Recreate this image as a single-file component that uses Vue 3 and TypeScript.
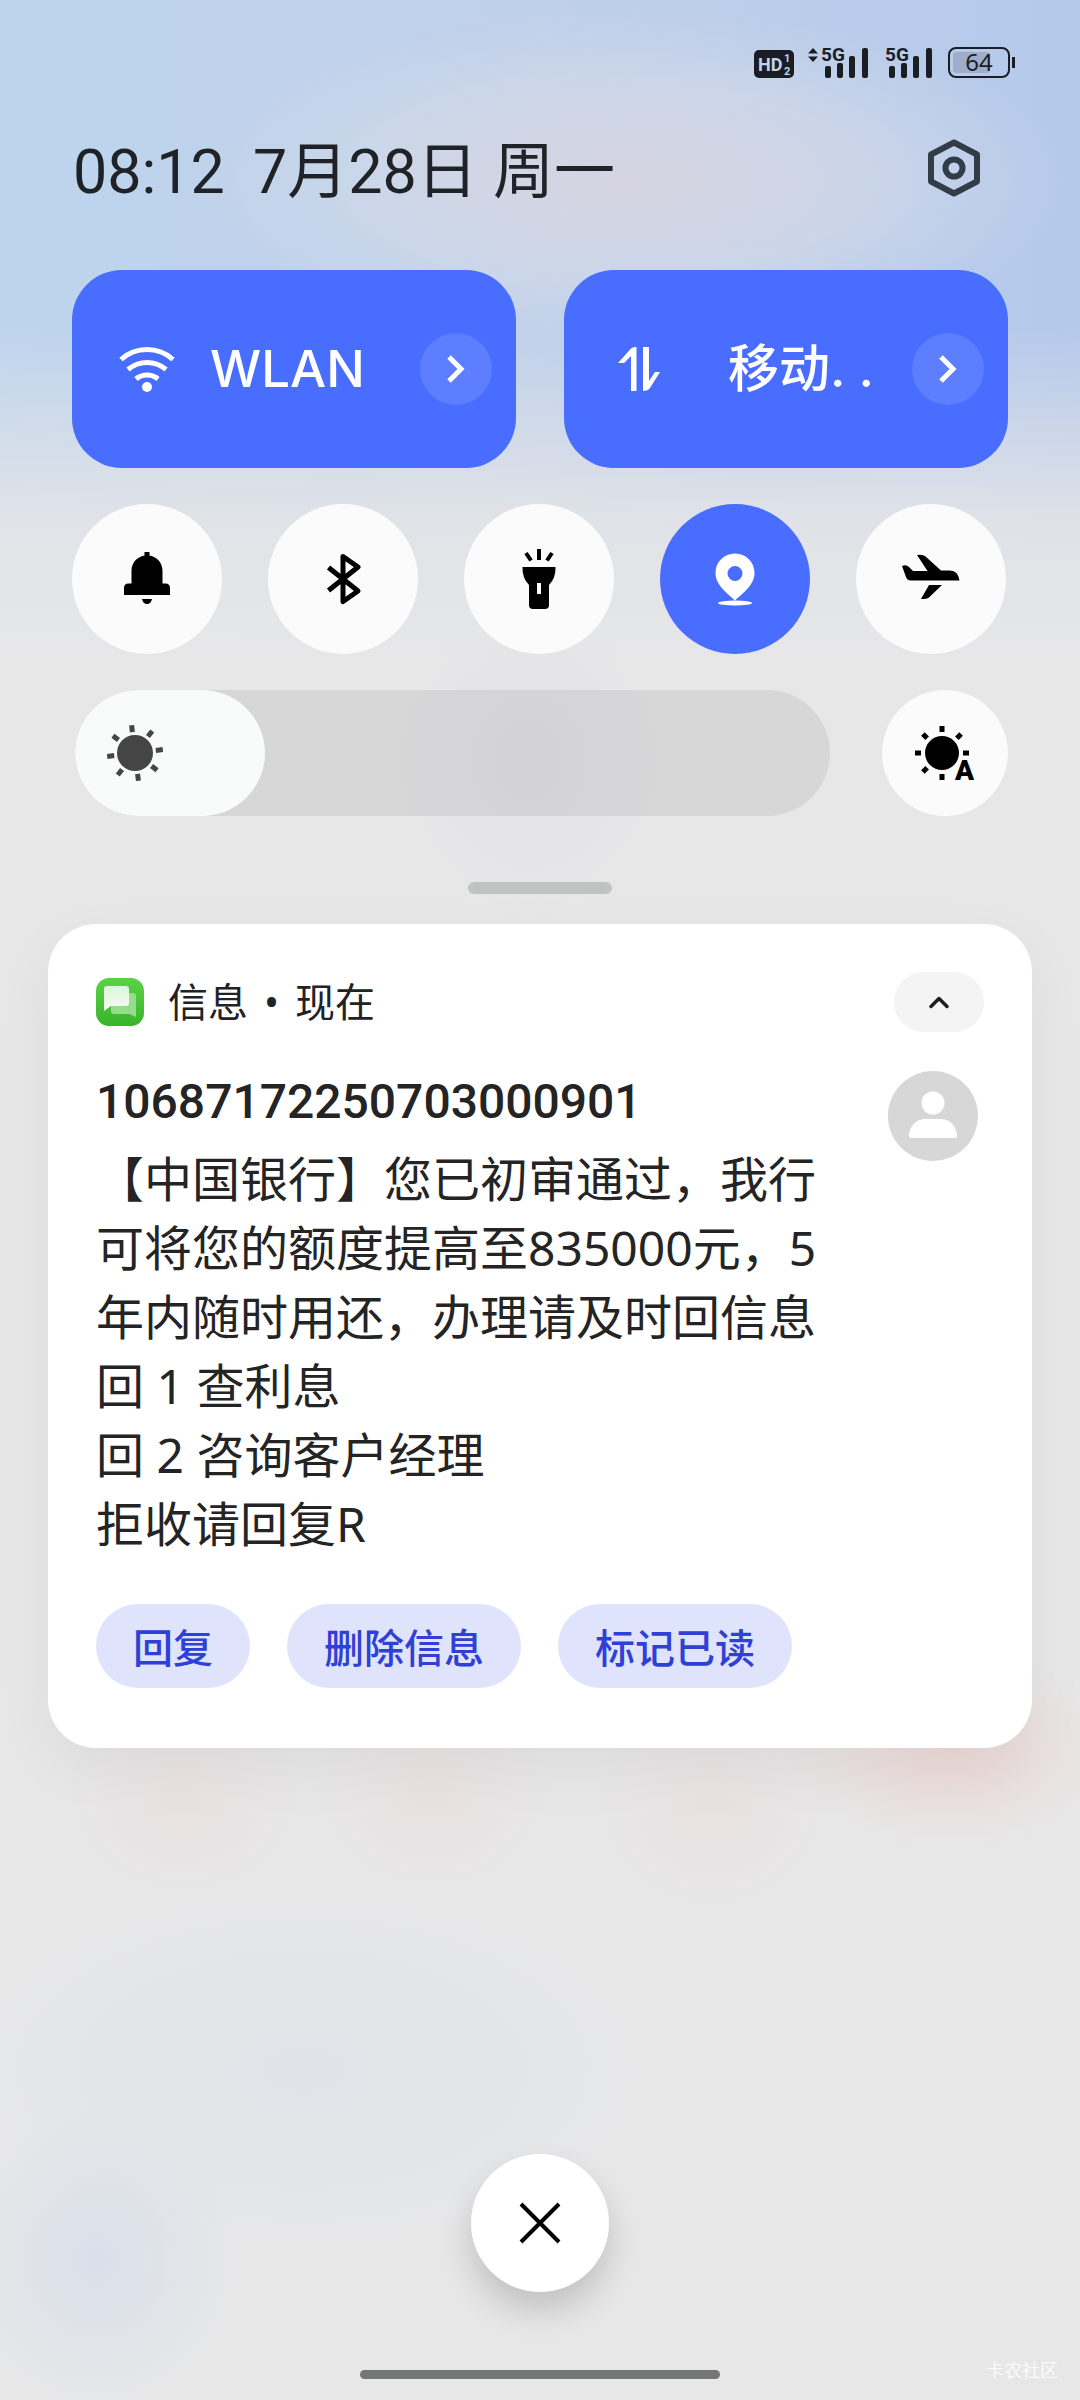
<script setup lang="ts">
import { ref } from 'vue'

interface Toggle {
  id: string
  label: string
  on: boolean
}

const toggles = ref<Toggle[]>([
  { id: 'bell', label: '响铃', on: false },
  { id: 'bluetooth', label: '蓝牙', on: false },
  { id: 'torch', label: '手电筒', on: false },
  { id: 'location', label: '定位', on: true },
  { id: 'plane', label: '飞行模式', on: false },
])

const brightness = ref<number>(0)

const message: string[] = [
  '【中国银行】您已初审通过，我行可将您的额度提高至835000元，5年内随时用还，办理请及时回信息',
  '回 1 查利息',
  '回 2 咨询客户经理',
  '拒收请回复R',
]

const actions: string[] = ['回复', '删除信息', '标记已读']

const rays: number[] = [0, 45, 90, 135, 180, 225, 270, 315]
const autoRays: number[] = [0, 45, 90, 180, 225, 270, 315]
</script>

<template>
  <div class="shade">
    <div class="status">
      <svg class="hd" width="40" height="28" viewBox="0 0 40 28">
        <rect width="40" height="28" rx="5" fill="#1a1e24" />
        <text x="4" y="21" font-size="18" font-weight="700" fill="#c3d2ec">HD</text>
        <text x="30" y="12" font-size="11" font-weight="700" fill="#c3d2ec">1</text>
        <text x="30" y="25" font-size="11" font-weight="700" fill="#c3d2ec">2</text>
      </svg>
      <svg class="signal" width="60" height="32" viewBox="0 0 60 32" fill="#1a1e24">
        <path d="M0 7.500 5 2l5 5.500zM0 10.500h10L5 16z" />
        <text x="13" y="15" font-size="19" font-weight="700">5G</text>
        <rect x="17" y="20" width="6" height="12" rx="2" />
        <rect x="29" y="17" width="6" height="15" rx="2" />
        <rect x="41" y="10" width="6" height="22" rx="2" />
        <rect x="54" y="2" width="6" height="30" rx="2" />
      </svg>
      <svg class="signal second" width="47" height="32" viewBox="0 0 47 32" fill="#1a1e24">
        <text x="0" y="15" font-size="19" font-weight="700">5G</text>
        <rect x="4" y="20" width="6" height="12" rx="2" />
        <rect x="16" y="17" width="6" height="15" rx="2" />
        <rect x="28" y="10" width="6" height="22" rx="2" />
        <rect x="41" y="2" width="6" height="30" rx="2" />
      </svg>
      <svg class="battery" width="67" height="31" viewBox="0 0 67 31">
        <rect x="5" y="5" width="37" height="21" rx="3" fill="#9fadca" />
        <rect x="1" y="1" width="60" height="29" rx="7" fill="none" stroke="#1a1e24" stroke-width="2" />
        <path d="M65.500 10v11" stroke="#1a1e24" stroke-width="3" />
        <text x="31" y="24" font-size="24" text-anchor="middle" fill="#1a1e24">64</text>
      </svg>
    </div>

    <header class="head">
      <div class="clock">
        <span>08:12</span>
        <span>7月28日 周一</span>
      </div>
      <button class="plain" aria-label="设置">
        <svg width="54" height="60" viewBox="0 0 54 60" fill="none" stroke="#323c48" stroke-width="6" stroke-linejoin="round">
          <path d="M27 4.500 50 16.500V43.500L27 55.500 4 43.500V16.500z" />
          <circle cx="27" cy="30" r="8.500" />
        </svg>
      </button>
    </header>

    <section class="tiles">
      <div class="tile">
        <svg class="tile-icon" width="56" height="48" viewBox="0 0 56 48" fill="none" stroke="#fff" stroke-width="5">
          <path d="M2 14.500a39 39 0 0 1 52 0M9 24.500a29 29 0 0 1 38 0M17 34a17 17 0 0 1 22 0" />
          <circle cx="28" cy="42" r="5" fill="#fff" stroke="none" />
        </svg>
        <span class="tile-name">WLAN</span>
        <button class="more" aria-label="WLAN 设置">
          <svg width="18" height="28" viewBox="0 0 18 28" fill="none" stroke="#fff" stroke-width="5"><path d="M2 2l12 12L2 26" /></svg>
        </button>
      </div>
      <div class="tile">
        <svg class="tile-icon" width="56" height="48" viewBox="-7 0 56 48" fill="#fff">
          <path d="M13 46V11L6 18H0L13 3.500Q15 1.500 18.500 2V46zM25 2h6V36L37 27H42L32 43Q30 46 25 46z" />
        </svg>
        <span class="tile-name center">移动. .</span>
        <button class="more" aria-label="移动数据设置">
          <svg width="18" height="28" viewBox="0 0 18 28" fill="none" stroke="#fff" stroke-width="5"><path d="M2 2l12 12L2 26" /></svg>
        </button>
      </div>
    </section>

    <section class="toggles">
      <button
        v-for="t in toggles"
        :key="t.id"
        class="round"
        :class="{ on: t.on }"
        :aria-label="t.label"
        :aria-pressed="t.on"
        @click="t.on = !t.on"
      >
        <svg width="60" height="60" viewBox="0 0 60 60" fill="currentColor">
          <path
            v-if="t.id === 'bell'"
            d="M27.500 3h5v3.500C40.500 8 45.500 14 45.500 22v12.500h3q4.500 0 4.500 4.500v7H7v-7q0-4.500 4.500-4.500h3V22C14.500 14 19.500 8 27.500 6.500zM25 50h10q-1 5-5 5t-5-5z"
          />
          <path
            v-else-if="t.id === 'bluetooth'"
            d="M15.500 18.500 45 42 30 52.500V7.500L45 18 15.500 41.500"
            fill="none"
            stroke="currentColor"
            stroke-width="5"
            stroke-linejoin="round"
          />
          <g v-else-if="t.id === 'torch'">
            <path d="M13.500 18h33q.5 11-6.500 18v20q0 4-4 4H24q-4 0-4-4V36q-7-7-6.500-18zM28 34v11h4V34z" fill-rule="evenodd" />
            <path d="M30 0v11M17 4l5 7.500M43 4l-5 7.500" stroke="currentColor" stroke-width="4" />
          </g>
          <g v-else-if="t.id === 'location'">
            <path d="M30 4.500c-11 0-19.500 8.500-19.500 19.500 0 13 14 22 19.500 27.500C35.500 46 49.500 37 49.500 24 49.500 13 41 4.500 30 4.500zm0 12.500a7.500 7.500 0 1 1 0 15 7.500 7.500 0 0 1 0-15z" fill-rule="evenodd" />
            <ellipse cx="30" cy="54" rx="17" ry="2.500" />
          </g>
          <path
            v-else
            d="M1 17q4-2 7 1l4 4H26.500L16 6q4-1 8 1L40 21.500H49q8 0 9.500 10H10q-4 0-5-3.500zM28 36h13L28 48.500q-2 1.500-8 1.500z"
          />
        </svg>
      </button>
    </section>

    <section class="bright">
      <div class="slider">
        <input v-model.number="brightness" type="range" min="0" max="100" aria-label="亮度" />
        <svg class="sun" width="60" height="60" viewBox="-30 -30 60 60" fill="#454545">
          <circle r="18" />
          <rect v-for="a in rays" :key="a" x="-2.500" y="-28" width="5" height="7" :transform="`rotate(${a - 7})`" />
        </svg>
      </div>
      <button class="round auto" aria-label="自动亮度">
        <svg width="66" height="72" viewBox="-30 -36 66 72">
          <circle r="17" />
          <rect v-for="a in autoRays" :key="a" x="-2.500" y="-27" width="5" height="6" :transform="`rotate(${a})`" />
          <text x="13" y="27" font-size="28" font-weight="900" stroke="#fbfbfb" stroke-width="4" paint-order="stroke">A</text>
        </svg>
      </button>
    </section>

    <div class="grip"></div>

    <article class="card">
      <div class="card-head">
        <svg width="48" height="48" viewBox="0 0 48 48">
          <defs>
            <linearGradient id="green" x1="0" y1="0" x2="0" y2="1">
              <stop offset="0" stop-color="#5bd246" />
              <stop offset="1" stop-color="#38b42b" />
            </linearGradient>
            <linearGradient id="bubble" x1="0" y1="0" x2="0" y2="1">
              <stop offset="0" stop-color="#dcf6d8" />
              <stop offset="1" stop-color="#f6fdf5" />
            </linearGradient>
          </defs>
          <rect width="48" height="48" rx="13" fill="url(#green)" />
          <path d="M18 15H37q3 0 3 3V39l-7-3H18q-3 0-3-3V18q0-3 3-3z" fill="#94dd8a" />
          <path d="M11 8H30q3 0 3 3V25q0 3-3 3H15l-7 5V11q0-3 3-3z" fill="url(#bubble)" />
        </svg>
        <div class="source">信息<span class="dot">•</span>现在</div>
        <button class="collapse" aria-label="收起">
          <svg width="20" height="14" viewBox="0 0 20 14" fill="none" stroke="#1f1f1f" stroke-width="3.500" stroke-linecap="round" stroke-linejoin="round"><path d="M2 11.500l8-8 8 8" /></svg>
        </button>
      </div>
      <div class="card-main">
        <div class="body">
          <h2>10687172250703000901</h2>
          <p v-for="line in message" :key="line">{{ line }}</p>
        </div>
        <svg class="avatar" width="90" height="90" viewBox="0 0 90 90">
          <circle cx="45" cy="45" r="45" fill="#d7d7d7" />
          <circle cx="45" cy="32" r="11.500" fill="#fff" />
          <path d="M37 48H53C63 48 69 57 69 65q0 2-2 2H23q-2 0-2-2C21 57 27 48 37 48z" fill="#fff" />
        </svg>
      </div>
      <div class="actions">
        <button v-for="a in actions" :key="a">{{ a }}</button>
      </div>
    </article>

    <footer class="foot">
      <button class="close" aria-label="清除全部">
        <svg width="42" height="42" viewBox="0 0 42 42" stroke="#000" stroke-width="4"><path d="M2 2l38 38M40 2L2 40" /></svg>
      </button>
      <div class="home"></div>
      <span class="mark">卡农社区</span>
    </footer>
  </div>
</template>

<style>
body {
  margin: 0;
}
</style>

<style scoped>
.shade {
  position: relative;
  display: flex;
  flex-direction: column;
  box-sizing: border-box;
  min-height: 100vh;
  padding: 46px 48px 0;
  font-family: 'Noto Sans', 'Noto Sans CJK SC', sans-serif;
  color: #1f2226;
  background:
    radial-gradient(ellipse 170px 100px at 88% 1750px, rgba(238, 205, 201, 0.6), transparent),
    radial-gradient(ellipse 120px 100px at 17% 1800px, rgba(234, 218, 218, 0.5), transparent),
    radial-gradient(ellipse 120px 100px at 40% 1795px, rgba(234, 218, 218, 0.5), transparent),
    radial-gradient(ellipse 120px 110px at 66% 1805px, rgba(234, 218, 218, 0.5), transparent),
    radial-gradient(ellipse 140px 150px at 9% 2260px, rgba(211, 221, 235, 0.7), transparent),
    radial-gradient(ellipse 340px 180px at 28% 2070px, rgba(221, 225, 232, 0.7), transparent),
    radial-gradient(ellipse 140px 160px at 49% 760px, rgba(218, 217, 225, 0.35), transparent),
    radial-gradient(ellipse 440px 170px at 58% 180px, rgba(217, 213, 223, 0.9), rgba(213, 219, 231, 0.6) 55%, transparent),
    linear-gradient(to bottom, transparent 330px, rgba(230, 230, 231, 0.85) 520px, #e7e7e8 660px),
    linear-gradient(to right, #bed4ed, #bfd0ea 50%, #b5c9eb);
}

button {
  display: flex;
  align-items: center;
  justify-content: center;
  padding: 0;
  border: 0;
  font: inherit;
  cursor: pointer;
}

.plain {
  background: none;
}

.status {
  display: flex;
  align-items: flex-end;
  justify-content: flex-end;
  height: 32px;
  padding-right: 17px;
  font-family: Roboto, sans-serif;
}

.signal {
  margin-left: 14px;
}

.second {
  margin-left: 17px;
}

.battery {
  margin-left: 16px;
  font-family: 'Noto Sans', sans-serif;
}

svg {
  overflow: visible;
}

.head {
  display: flex;
  align-items: center;
  justify-content: space-between;
  height: 96px;
  margin-top: 42px;
  padding: 0 51px 0 25px;
}

.clock {
  display: flex;
  gap: 28px;
  padding-top: 8px;
  font-family: Roboto, 'Noto Sans CJK SC', sans-serif;
  font-size: 61px;
  font-weight: 400;
  line-height: 90px;
  white-space: nowrap;
}

.tiles {
  display: grid;
  grid-template-columns: 1fr 1fr;
  gap: 48px;
  margin-top: 54px;
  padding: 0 24px;
}

.tile {
  display: flex;
  align-items: center;
  box-sizing: border-box;
  height: 198px;
  padding: 0 24px 0 47px;
  border-radius: 50px;
  background: #486dff;
  color: #fff;
}

.tile-icon {
  flex: none;
}

.tile-name {
  flex: 1;
  margin-left: 35px;
  font-family: Inter, 'Noto Sans CJK SC', sans-serif;
  font-size: 51px;
  font-weight: 500;
  line-height: 72px;
  white-space: nowrap;
}

.center {
  padding-right: 12px;
  text-align: center;
}

.more {
  width: 72px;
  height: 72px;
  border-radius: 50%;
  background: #5c7eff;
}

.toggles {
  display: flex;
  justify-content: space-between;
  margin-top: 36px;
  padding: 0 26px 0 24px;
}

.round {
  width: 150px;
  height: 150px;
  border-radius: 50%;
  background: #fbfbfb;
  color: #000;
}

.round.on {
  background: #486dff;
  color: #fff;
}

.bright {
  display: flex;
  align-items: center;
  gap: 52px;
  margin-top: 36px;
  padding: 0 24px 0 27px;
}

.slider {
  position: relative;
  flex: 1;
  height: 126px;
}

.slider input {
  appearance: none;
  display: block;
  width: 100%;
  height: 126px;
  margin: 0;
  border-radius: 63px;
  overflow: hidden;
  background: rgba(0, 0, 0, 0.065);
}

.slider input::-webkit-slider-thumb {
  appearance: none;
  width: 190px;
  height: 126px;
  border-radius: 63px;
  background: #f9fafa;
}

.sun {
  position: absolute;
  left: 30px;
  top: 33px;
  pointer-events: none;
}

.auto {
  width: 126px;
  height: 126px;
  font-family: Roboto, sans-serif;
}

.grip {
  align-self: center;
  width: 144px;
  height: 12px;
  margin-top: 66px;
  border-radius: 6px;
  background: #c1c2c2;
}

.card {
  margin-top: 30px;
  padding: 48px 48px 60px;
  border-radius: 48px;
  background: #fff;
  box-shadow: 0 20px 60px rgba(0, 0, 0, 0.05);
}

.card-head {
  display: flex;
  align-items: center;
  height: 60px;
}

.source {
  flex: 1;
  margin-left: 24px;
  font-size: 40px;
  line-height: 60px;
}

.dot {
  margin: 0 16px;
}

.collapse {
  width: 90px;
  height: 60px;
  border-radius: 30px;
  background: #f4f4f4;
}

.card-main {
  display: flex;
  justify-content: space-between;
  margin-top: 36px;
}

.body {
  flex: 0 1 732px;
  color: #242424;
}

.body h2 {
  margin: 0 0 8px;
  font-family: Roboto, sans-serif;
  font-size: 48px;
  font-weight: 500;
  line-height: 68px;
}

.body p {
  margin: 0;
  font-size: 48px;
  line-height: 69px;
}

.avatar {
  flex: none;
  margin: 3px 6px 0 0;
}

.actions {
  display: flex;
  gap: 37px;
  margin-top: 46px;
}

.actions button {
  height: 84px;
  padding: 0 37px;
  border-radius: 42px;
  background: #dfe3fb;
  color: #2f40d6;
  font-size: 40px;
  font-weight: 500;
}

.foot {
  display: flex;
  flex-direction: column;
  align-items: center;
  margin-top: auto;
  padding-bottom: 21px;
}

.close {
  width: 138px;
  height: 138px;
  border-radius: 50%;
  background: #fff;
  box-shadow: 0 18px 32px rgba(0, 0, 0, 0.16);
}

.home {
  width: 360px;
  height: 9px;
  margin-top: 78px;
  border-radius: 5px;
  background: #757676;
}

.mark {
  position: absolute;
  right: 22px;
  bottom: 18px;
  font-size: 18px;
  line-height: 24px;
  color: #fafafa;
}
</style>
